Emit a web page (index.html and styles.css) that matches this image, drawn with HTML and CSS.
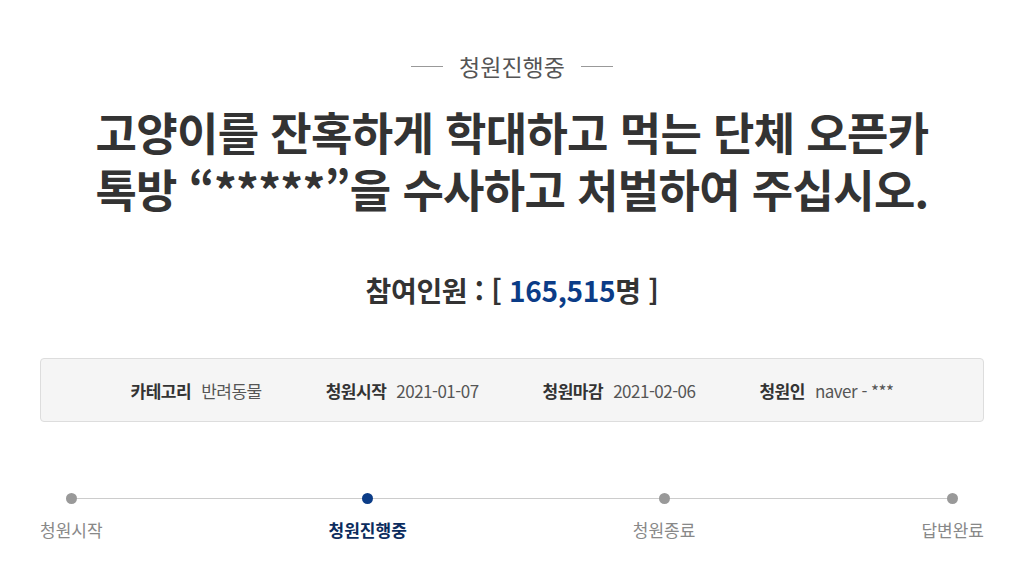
FILE: index.html
```html
<!DOCTYPE html>
<html lang="ko">
<head>
    <meta charset="UTF-8">
    <meta name="viewport" content="width=device-width, initial-scale=1.0">
    <title>청원진행중</title>
    <link rel="stylesheet" href="styles.css">
</head>
<body>
    <div class="container">
        <p class="status"><span>청원진행중</span></p>
        <h1 class="title">고양이를 잔혹하게 학대하고 먹는 단체 오픈카<br>톡방 “*****”을 수사하고 처벌하여 주십시오.</h1>
        <p class="count">참여인원 : [ <span class="num">165,515</span>명 ]</p>

        <ul class="info">
            <li><b>카테고리</b>반려동물</li>
            <li><b>청원시작</b>2021-01-07</li>
            <li><b>청원마감</b>2021-02-06</li>
            <li><b>청원인</b>naver - ***</li>
        </ul>

        <ol class="steps">
            <li>청원시작</li>
            <li class="on">청원진행중</li>
            <li>청원종료</li>
            <li>답변완료</li>
        </ol>
    </div>
</body>
</html>
```

FILE: styles.css
```css
body {
    font-family: "Noto Sans CJK KR", "Noto Sans", sans-serif;
    margin: 0;
    background: #fff;
    color: #333;
}
.container {
    padding: 0 40px;
}
.status {
    margin: 0;
    padding-top: 50px;
    display: flex;
    justify-content: center;
    align-items: center;
    gap: 16px;
    font-size: 23px;
    line-height: 32px;
    color: #555;
}
.status::before,
.status::after {
    content: "";
    width: 32px;
    height: 1px;
    background: #999;
}
.title {
    margin: 21px 0 0;
    text-align: center;
    font-size: 45px;
    line-height: 57px;
    letter-spacing: -0.7px;
    font-weight: bold;
    color: #333;
}
.count {
    margin: 53px 0 0;
    text-align: center;
    font-size: 28px;
    line-height: 40px;
    font-weight: bold;
    letter-spacing: -0.3px;
}
.count .num {
    color: #0b3c87;
}
.info {
    list-style: none;
    margin: 48px 0 0;
    padding: 0;
    height: 62px;
    border: 1px solid #ddd;
    border-radius: 4px;
    background: #f5f5f5;
    display: flex;
    justify-content: center;
    align-items: center;
    gap: 64px;
    font-size: 17px;
    color: #555;
    letter-spacing: -0.5px;
}
.info b {
    color: #333;
    margin-right: 10px;
}
.steps {
    list-style: none;
    margin: 71px 0 0;
    padding: 0;
    display: flex;
    justify-content: space-between;
    position: relative;
}
.steps::before {
    content: "";
    position: absolute;
    left: 31px;
    right: 31px;
    top: 5px;
    height: 1px;
    background: #ccc;
}
.steps li {
    display: flex;
    flex-direction: column;
    align-items: center;
    gap: 14px;
    font-size: 17px;
    line-height: 24px;
    color: #888;
    position: relative;
}
.steps li::before {
    content: "";
    width: 11px;
    height: 11px;
    border-radius: 50%;
    background: #999;
}
.steps li.on {
    color: #0b2c5e;
    font-weight: bold;
}
.steps li.on::before {
    background: #0b3c87;
}
```
